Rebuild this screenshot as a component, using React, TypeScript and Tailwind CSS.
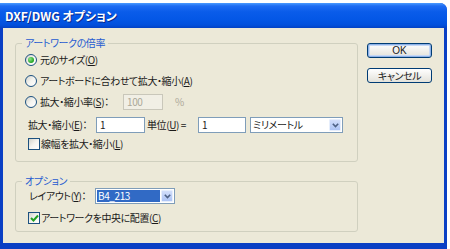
import React from "react";

const Radio = ({ checked }: { checked?: boolean }) => (
  <span className="w-[12px] h-[12px] shrink-0 rounded-full border border-[#1C5180] bg-gradient-to-br from-[#D4D4CC] via-[#F4F4F0] to-white flex items-center justify-center">
    {checked && (
      <span className="w-[6px] h-[6px] rounded-full bg-[radial-gradient(circle_at_35%_35%,#8CE88A,#21A121_70%)]" />
    )}
  </span>
);

const Check = ({ checked }: { checked?: boolean }) => (
  <span className="w-[12px] h-[12px] shrink-0 border border-[#1C5180] bg-gradient-to-br from-[#D4D4CC] via-[#F4F4F0] to-white flex items-center justify-center">
    {checked && (
      <svg width="9" height="8" viewBox="0 0 9 8">
        <path d="M1 4 L3.5 6.5 L8 1.5" fill="none" stroke="#21A121" strokeWidth="2" />
      </svg>
    )}
  </span>
);

const ComboButton = () => (
  <span className="w-[12px] shrink-0 my-[1px] mr-[1px] rounded-[1px] border border-[#E6EEFC] bg-gradient-to-b from-[#D2DEFA] to-[#ADC4F5] flex items-center justify-center">
    <svg width="7" height="5" viewBox="0 0 7 5">
      <path d="M0.8 0.8 L3.5 3.6 L6.2 0.8" fill="none" stroke="#4D6185" strokeWidth="1.6" />
    </svg>
  </span>
);

const Field = ({ value, w }: { value: string; w: string }) => (
  <span className={`${w} h-[16px] shrink-0 border border-[#7F9DB9] bg-white flex items-center pl-[3px]`}>{value}</span>
);

export default function App() {
  return (
    <div className="w-[450px] h-[249px] bg-white overflow-hidden text-[10px] leading-[14px] text-[#1a1a1a] font-['Noto_Sans_CJK_JP',sans-serif] [font-feature-settings:'palt'] tracking-[-0.4px] [&_u]:underline-offset-[1px]">
      <div className="mt-[3px] w-[447px] h-[246px] flex flex-col rounded-tr-[7px] overflow-hidden bg-[#0A3FC4]">
        <div className="h-[25px] shrink-0 flex items-center pl-[5px] text-white font-bold text-[12px] tracking-[0px] bg-[linear-gradient(to_bottom,#4A9BFF_0%,#1E6CF2_12%,#0A5CEA_35%,#0457E6_65%,#0250DC_88%,#0342C4_100%)] [text-shadow:1px_1px_#0A2A8A]">
          DXF/DWG オプション
        </div>
        <div className="flex-1 mx-[3px] mb-[6px] bg-[#ECE9D8] flex pl-[12px] pt-[8px]">
          <div className="w-[343px] flex flex-col">
            <fieldset className="border border-[#D0D0BF] rounded-[3px]">
              <legend className="ml-[6px] px-[3px] text-[#1F5BD0] leading-[14px]">アートワークの倍率</legend>
              <div className="pl-[9px] pt-[3px] pb-[10px] flex flex-col">
                <div className="h-[14px] flex items-center gap-[3px]">
                  <Radio checked />
                  <span>元のサイズ(<u>O</u>)</span>
                </div>
                <div className="mt-[7px] h-[14px] flex items-center gap-[3px]">
                  <Radio />
                  <span>アートボードに合わせて拡大・縮小(<u>A</u>)</span>
                </div>
                <div className="mt-[6px] h-[16px] flex items-center">
                  <Radio />
                  <span className="ml-[3px] w-[83px]">拡大・縮小率(<u>S</u>)：</span>
                  <span className="w-[40px] h-[16px] border border-[#C9C7BA] bg-[#F1EFE5] text-[#ACA899] flex items-center pl-[3px]">100</span>
                  <span className="ml-[12px] text-[#ACA899]">%</span>
                </div>
                <div className="mt-[7px] h-[16px] flex items-center">
                  <span className="ml-[3px] w-[68px]">拡大・縮小(<u>E</u>)：</span>
                  <Field value="1" w="w-[49px]" />
                  <span className="ml-[2px] w-[51px]">単位(<u>U</u>) =</span>
                  <Field value="1" w="w-[48px]" />
                  <span className="ml-[4px] w-[93px] h-[16px] flex border border-[#7F9DB9] bg-white">
                    <span className="flex-1 flex items-center pl-[2px]">ミリメートル</span>
                    <ComboButton />
                  </span>
                </div>
                <div className="mt-[4px] h-[14px] flex items-center gap-[1px] ml-[3px]">
                  <Check />
                  <span>線幅を拡大・縮小(<u>L</u>)</span>
                </div>
              </div>
            </fieldset>
            <fieldset className="mt-[12px] border border-[#D0D0BF] rounded-[3px]">
              <legend className="ml-[6px] px-[3px] text-[#1F5BD0] leading-[14px]">オプション</legend>
              <div className="pl-[9px] pb-[6px] flex flex-col">
                <div className="h-[16px] flex items-center">
                  <span className="ml-[4px] w-[66px]">レイアウト(<u>Y</u>)：</span>
                  <span className="w-[80px] h-[16px] flex border border-[#7F9DB9] bg-white">
                    <span className="flex-1 my-[1px] ml-[1px] mr-[1px] bg-[#316AC5] text-white flex items-center pl-[1px]">B4_213</span>
                    <ComboButton />
                  </span>
                </div>
                <div className="mt-[7px] h-[14px] flex items-center gap-[1px] ml-[3px]">
                  <Check checked />
                  <span>アートワークを中央に配置(<u>C</u>)</span>
                </div>
              </div>
            </fieldset>
          </div>
          <div className="ml-[9px] pt-[7px] flex flex-col gap-[10px]">
            <button className="w-[65px] h-[15px] rounded-[3px] border border-[#003C74] bg-gradient-to-b from-white to-[#E3E2DA] shadow-[inset_0_0_0_1px_#8DB2E8,inset_0_0_0_2px_#C6D8F5] flex items-center justify-center font-['Liberation_Sans',sans-serif] text-[10px] tracking-[0px]">
              OK
            </button>
            <button className="w-[65px] h-[15px] rounded-[3px] border border-[#003C74] bg-gradient-to-b from-white to-[#E3E2DA] flex items-center justify-center text-[10px]">
              キャンセル
            </button>
          </div>
        </div>
      </div>
    </div>
  );
}
